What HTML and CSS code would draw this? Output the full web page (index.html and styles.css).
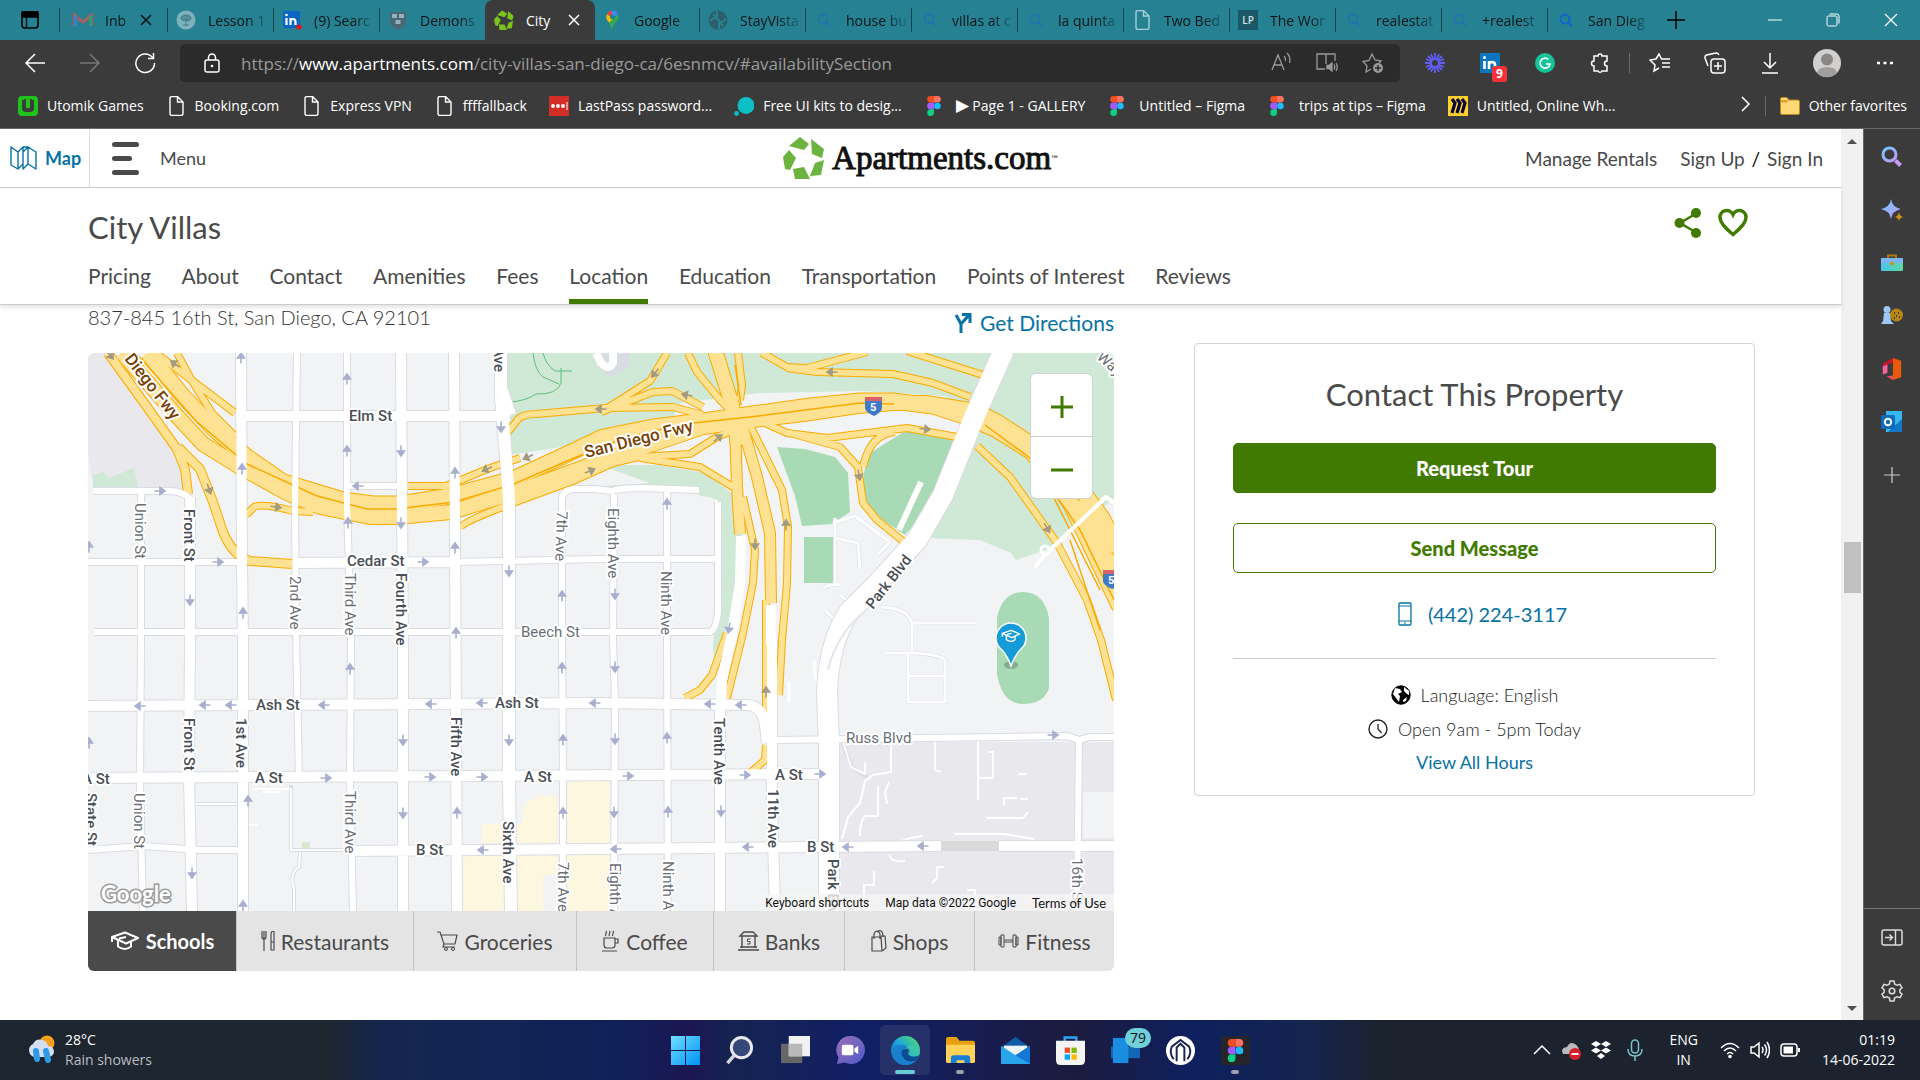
FILE: index.html
```html
<!DOCTYPE html>
<html lang="en">
<head>
<meta charset="utf-8">
<title>City Villas</title>
<link rel="stylesheet" href="styles.css">
</head>
<body>
<svg class="defs" aria-hidden="true">
  <defs>
    <linearGradient id="gEdge" x1="0" y1="1" x2="1" y2="0"><stop offset="0" stop-color="#0c59a4"/><stop offset=".5" stop-color="#1ba6dc"/><stop offset="1" stop-color="#5fe05a"/></linearGradient>
    <linearGradient id="gWin" x1="0" y1="0" x2="1" y2="1"><stop offset="0" stop-color="#6fe0ff"/><stop offset="1" stop-color="#0090f5"/></linearGradient>
    <linearGradient id="gLens" x1="0" y1="0" x2="1" y2="1"><stop offset="0" stop-color="#6fc6ff"/><stop offset="1" stop-color="#c49af5"/></linearGradient>
    <linearGradient id="gBox" x1="0" y1="0" x2="1" y2="0"><stop offset="0" stop-color="#45c4f0"/><stop offset="1" stop-color="#5fd7a0"/></linearGradient>
    <linearGradient id="gChat" x1="0" y1="0" x2="1" y2="1"><stop offset="0" stop-color="#9a6fb8"/><stop offset="1" stop-color="#5059c9"/></linearGradient>
    <path id="ar" d="M-5.500 0H1M0-3.500L5 0 0 3.500z" fill="currentColor" stroke="currentColor" stroke-width="1.600"/>
    <g id="shield"><path d="M0 3q8-3 17 0v8q0 4-8 8-9-4-9-8z" fill="#3f79c9"/><path d="M0 4V0h17v4z" fill="#d9626a"/></g>
    <g id="streets">
      <path class="s6" d="M141 493v150l-1 140 3 130M297 353l-2 150 1 130 3 147M347 353v150l4 137-1 140 3 131M563 911V780l-1-140V500q0-10 12-11h20q10 1 18 2 8-3 30-3l57 2M614 494l-1 146 2 60-1 211M667 491v149l1 271M718 502v110q-2 18-8 20H94M93 491h75q16 0 22 8M88 562h155M455 562l145-3h118M88 850l55-4 57 4h45M350 486h50M777 740l290-4 12 4 10-3h25M1079 740l-2 171"/>
      <path class="s10" d="M190 497v150l-1 130 3 134M241 353l1 210 1 80v268M401 353l2 300v258M454 353l3 558M240 416h270M295 563l165-1M88 706l175-1 340-2 144 2q15 0 18 20l2 18M88 778l742-4M352 851l589-5M999 846h115M720 700v211M772 640v160l3 111"/>
      <path class="s11" d="M501 353v45l5 60 3 42v280l2 131M510 415l-10-30"/>
      <path class="s20" d="M1004 350l-29 65-32 80-26 45-40 44-28 28q-20 30-22 80l2 51v169"/>
    </g>
    <g id="freeways">
      <path class="s16" d="M148 353l34 42 32 34 33 28 36 25 60 18 30 4h27l50-8 63-17 50-23 40-19 50-10 50-6 57-8 50-7 50-5h33l40 5 37 12 27 12 35 22 38 50 50 105"/>
      <path class="s14" d="M122 353l55 63 26 28 37 23 47 26 33 14 50 10h27l54-5 62-19 50-18 40-15 50-16 50-17 50-7 50-6 55-8 35-3h33l50 8 20 10 22 14 47 32 37 50 47 90"/>
      <path class="s8" d="M108 353l39 54 30 42 8 20 3 25M178 447l22 22 13 33 10 30q10 24 27 29l42 3"/>
      <path class="s6" d="M156 353l79 60M177 353l15 28 20 32 24 24M246 515l8-8q8-4 39 4l20 1M408 486h38l44-18 30-10M460 528q2-6 53-25l60-22 40-18 25-6 52-3 27-17 28-12M508 432l8-10q4-8 20-8l70-6 67-1 30 8M601 412l49-31 17-28M601 412l52-20 19-1 31 16M640 458l60 9 33 20M688 353l9 19 23 28 20 20M738 353l4 32-2 15M762 353l25 14 20 1 60-16M787 368l30 4 76 2 40 9 37 14M907 351l76 24M765 423l22 10 40 5 80-10 50 9M790 433l50 14 18 20 5 36 14 17 27 22M895 432q-25 2-32 35M977 446l33 31 47 66 30 57 14 40 15 60"/>
      <path class="s14" d="M715 350l17 55 6 40"/>
      <path class="s10" d="M735 425l2 62 3 47M742 425l15 52 13 56 1 70"/>
      <path class="s6" d="M750 425l32 65 6 37-1 56-5 57-3 55M743 497l12 53-2 33-10 50-16 65M727 633l-15 42-12 15-15 8M766 600v120M766 745l-1 15-15 13"/>
      <path class="s16" d="M1055 480l59 90"/><path class="s14" d="M1080 500l34 50"/>
    </g>
  </defs>
  <symbol id="doc" viewBox="0 0 20 20"><path d="M4 2.500a2 2 0 0 1 2-2h5.500l5.500 5.500v11.500a2 2 0 0 1-2 2H6a2 2 0 0 1-2-2zM11.500.5V6H17" fill="none" stroke="currentColor" stroke-width="1.400"/></symbol>
  <symbol id="mag" viewBox="0 0 20 20"><circle cx="9" cy="9" r="4.500" fill="none" stroke="currentColor" stroke-width="2"/><path d="M12.500 12.500L16 16" stroke="currentColor" stroke-width="2.200"/></symbol>
  <symbol id="figma" viewBox="0 0 14 20"><path d="M3.500 0H7v6.600H3.500a3.300 3.300 0 0 1 0-6.600z" fill="#f24e1e"/><path d="M7 0h3.500a3.300 3.300 0 0 1 0 6.600H7z" fill="#ff7262"/><path d="M3.500 6.600H7v6.700H3.500a3.300 3.300 0 0 1 0-6.700z" fill="#a259ff"/><circle cx="10.400" cy="10" r="3.300" fill="#1abcfe"/><path d="M3.500 13.300H7v3.300a3.400 3.400 0 1 1-3.500-3.300z" fill="#0acf83"/></symbol>
  <symbol id="cap" viewBox="0 0 30 20"><path d="M2 6L15 1.500 28 7 16 12.500zM8 9.500v6q7 5 13 0V10M2 6v5M9 7.500l7-1.500" fill="none" stroke="currentColor" stroke-width="2" stroke-linejoin="round"/></symbol>
</svg>

<header class="browser">
  <div class="tabstrip">
    <button class="strip-menu" aria-label="Tab actions"><svg width="20" height="20" viewBox="0 0 20 20"><rect x="2" y="2" width="16" height="16" rx="3" fill="none" stroke="#000" stroke-width="1.600"/><path d="M2 2h16v5H2zM6.500 7v11" stroke="#000" stroke-width="1.300"/></svg></button>
    <div class="tab first"><svg class="fav dim" viewBox="0 0 20 20"><path d="M1 16V5l9 7 9-7v11" fill="none" stroke="#d9534f" stroke-width="3"/><path d="M2.500 16V6" stroke="#4a7de0" stroke-width="3"/><path d="M17.500 16V6" stroke="#3aa757" stroke-width="3"/></svg><span class="tab-t">Inb</span><button class="x" aria-label="Close"><svg width="12" height="12" viewBox="0 0 12 12"><path d="M1 1l10 10M11 1L1 11" class="ln"/></svg></button></div>
    <div class="tab"><svg class="fav" viewBox="0 0 20 20"><circle cx="10" cy="10" r="9.500" fill="#7fb3bb"/><path d="M10 16V9M7 15h6M5 9q0-4 5-4t5 4q-2 3-5 1-3 2-5-1z" stroke="#3b7a84" fill="#568f98"/></svg><span class="tab-t">Lesson 1</span></div>
    <div class="tab"><svg class="fav" viewBox="0 0 20 20"><rect x="1" y="1" width="17" height="17" rx="2" fill="#0a66c2"/><path d="M4.500 8v7M8.500 15V8m0 4q0-3 2.500-3t2.500 3v3" stroke="#fff" stroke-width="2.200" fill="none"/><circle cx="4.500" cy="5" r="1.300" fill="#fff"/><circle cx="17" cy="17" r="2.600" fill="#e11"/></svg><span class="tab-t">(9) Searc</span></div>
    <div class="tab"><svg class="fav" viewBox="0 0 20 20"><path d="M2 2h16v9q-1 6-8 8.500Q3 17 2 11z" fill="#4d6672"/><path d="M4 4h5v4H4zM11 4h5v4h-5zM7.500 10h5v4h-5z" fill="#8fb5bf"/></svg><span class="tab-t">Demons</span></div>
    <div class="tab active"><svg class="fav" viewBox="782 134 44 44"><path fill="#7cc41a" d="M800 135l11 7-6 8-16-5zM813 136l12 11-3 10-11-5zM824 158l-3 16-12 1 5-13zM793 166l12 0 5 12H794zM789 147l8 9-7 13-5-1-3-13z"/></svg><span class="tab-t">City</span><button class="x" aria-label="Close"><svg width="12" height="12" viewBox="0 0 12 12"><path d="M1 1l10 10M11 1L1 11" class="ln"/></svg></button></div>
    <div class="tab maps"><svg class="fav" viewBox="0 0 20 20"><path d="M10 19.500Q9 14 5 10a6.500 6.500 0 0 1 0-6l5 3z" fill="#fbbc04"/><path d="M5 4a6.500 6.500 0 0 1 5-3.500V8z" fill="#ea4335"/><path d="M10 .5a6.500 6.500 0 0 1 6 4L9 8z" fill="#4285f4"/><path d="M16 4.500q1.500 4-2 7.500-3.500 3-4 7.500-1-4-3-7z" fill="#34a853"/><circle cx="10" cy="7" r="2.200" fill="#24808f"/></svg><span class="tab-t">Google</span></div>
    <div class="tab"><svg class="fav" viewBox="0 0 20 20"><circle cx="10" cy="10" r="9.500" fill="#2d5f6a"/><path d="M9 1v6q-4 1-7 4M11 19v-6q4-1 7-4M5 4q6 6 10 12" stroke="#268293" stroke-width="2" fill="none"/></svg><span class="tab-t">StayVista</span></div>
    <div class="tab"><svg class="fav blue"><use href="#mag"/></svg><span class="tab-t">house bu</span></div>
    <div class="tab"><svg class="fav blue"><use href="#mag"/></svg><span class="tab-t">villas at c</span></div>
    <div class="tab"><svg class="fav blue"><use href="#mag"/></svg><span class="tab-t">la quinta</span></div>
    <div class="tab"><svg class="fav pale"><use href="#doc"/></svg><span class="tab-t">Two Bed</span></div>
    <div class="tab"><span class="fav lp">LP</span><span class="tab-t">The Wor</span></div>
    <div class="tab"><svg class="fav blue"><use href="#mag"/></svg><span class="tab-t">realestat</span></div>
    <div class="tab"><svg class="fav blue"><use href="#mag"/></svg><span class="tab-t">+realest</span></div>
    <div class="tab"><svg class="fav bright"><use href="#mag"/></svg><span class="tab-t">San Dieg</span></div>
    <button class="newtab" aria-label="New tab"><svg width="18" height="18" viewBox="0 0 18 18"><path d="M9 0v18M0 9h18" stroke="#000" stroke-width="1.500"/></svg></button>
    <div class="winctl">
      <button aria-label="Minimize"><svg width="14" height="14" viewBox="0 0 14 14"><path d="M0 7h14" stroke="#fff"/></svg></button>
      <button aria-label="Restore"><svg width="14" height="14" viewBox="0 0 14 14"><path d="M1 4.500a1.500 1.500 0 0 1 1.500-1.500h7A1.500 1.500 0 0 1 11 4.500v7a1.500 1.500 0 0 1-1.500 1.500h-7A1.500 1.500 0 0 1 1 11.500zM3.500 1H11q2 0 2 2v7.500" fill="none" stroke="#fff"/></svg></button>
      <button aria-label="Close window"><svg width="14" height="14" viewBox="0 0 14 14"><path d="M1 1l12 12M13 1L1 13" stroke="#fff" stroke-width="1.200"/></svg></button>
    </div>
  </div>

  <div class="toolbar">
    <button class="tb" aria-label="Back"><svg width="22" height="22" viewBox="0 0 22 22"><path d="M21 11H2M11 2l-9 9 9 9" class="ln"/></svg></button>
    <button class="tb off" aria-label="Forward"><svg width="22" height="22" viewBox="0 0 22 22"><path d="M1 11h19M11 2l9 9-9 9" class="ln"/></svg></button>
    <button class="tb" aria-label="Reload"><svg width="22" height="22" viewBox="0 0 22 22"><path d="M18.500 5.500A9.300 9.300 0 1 0 20.500 11M19.500 1v5.500H14" class="ln"/></svg></button>
    <div class="address">
      <svg width="18" height="20" viewBox="0 0 18 20"><rect x="2" y="7" width="14" height="12" rx="2" class="ln"/><path d="M5.500 7V4.500a3.500 3.500 0 0 1 7 0V7" class="ln"/><circle cx="9" cy="13" r="1.300" fill="#fff"/></svg>
      <div class="url">https://<b>www.apartments.com</b>/city-villas-san-diego-ca/6esnmcv/#availabilitySection</div>
      <div class="addr-icons">
        <svg width="22" height="20" viewBox="0 0 22 20"><path d="M2 18L8 3l6 15M4 13h8M14 4q2 2 1.500 5M17 1q4 4 2.500 10" class="lg"/></svg>
        <svg width="22" height="20" viewBox="0 0 22 20"><path d="M9 17H1V2h9v10M10 2h9v7M11 13.500h2l3-2.500v8L13 16.500h-2z" class="lg"/><path d="M11 13.500h2l3-2.500v8l-3-2.500h-2z" fill="#9a9a9a"/><path d="M18 12.500q1.500 2.500 0 5M20 11q2.500 4 0 8" class="lg"/></svg>
        <svg width="22" height="22" viewBox="0 0 22 22"><path d="M9 17l-5 3 1-6-4-4.500 6-1L10 2l3 6 6 1-2 2" class="lg"/><circle cx="16" cy="16" r="5" fill="#9a9a9a"/><path d="M16 13v6M13 16h6" stroke="#2b2b2b" stroke-width="1.400"/></svg>
      </div>
    </div>
    <div class="exts">
      <button class="tb" aria-label="Loom"><svg width="22" height="22" viewBox="-11 -11 22 22"><path d="M0-10V10M-10 0H10M-7-7L7 7M-7 7L7-7M-4-9L4 9M4-9L-4 9M-9-4L9 4M-9 4L9-4" stroke="#625df5" stroke-width="1.800"/><circle r="3" fill="#3b3b3b"/></svg></button>
      <button class="tb" aria-label="LinkedIn"><svg width="20" height="20" viewBox="0 0 20 20"><path d="M0 0h20v20H0z" fill="#0a76bb"/><path d="M4.500 8v8M9 16V8m0 4q0-3 3-3t3 3v4" stroke="#fff" stroke-width="2.600" fill="none"/><circle cx="4.500" cy="4.500" r="1.500" fill="#fff"/></svg><span class="badge">9</span></button>
      <button class="tb" aria-label="Grammarly"><svg width="20" height="20" viewBox="0 0 20 20"><circle cx="10" cy="10" r="10" fill="#15c39a"/><path d="M13.500 6.500A5 5 0 1 0 15 11h-4" stroke="#fff" stroke-width="1.600" fill="none"/></svg></button>
      <button class="tb" aria-label="Extensions"><svg width="22" height="22" viewBox="0 0 22 22"><path d="M5 4h4a2 2 0 0 1 4 0h5v5a2.300 2.300 0 0 0 0 5v5h-5a2.200 2.200 0 0 1-4 0H5v-5a2.500 2.500 0 0 1 0-5z" class="ln"/></svg></button>
      <span class="sep"></span>
      <button class="tb" aria-label="Favorites"><svg width="22" height="22" viewBox="0 0 22 22"><path d="M10 16l-5 3 1-6-5-5 6-1 3-5 2.500 5H21M13 11h8M13 15h8" class="ln"/></svg></button>
      <button class="tb" aria-label="Collections"><svg width="22" height="22" viewBox="0 0 22 22"><rect x="7" y="7" width="14" height="14" rx="3" class="ln"/><path d="M14 10v8M10 14h8M4 14L1 6q-.5-2 1.500-3L12 1q2-.5 3 2" class="ln"/></svg></button>
      <button class="tb" aria-label="Downloads"><svg width="22" height="22" viewBox="0 0 22 22"><path d="M11 1v15M5 10l6 6 6-6M3 21h16" class="ln"/></svg></button>
      <button class="tb wide" aria-label="Profile"><svg width="30" height="30" viewBox="0 0 30 30"><circle cx="15" cy="15" r="14" fill="#d2d0ce"/><circle cx="15" cy="11.500" r="6" fill="#8a8886"/><path d="M5 25q1-6 10-6t10 6a14 14 0 0 1-20 0" fill="#a19f9d"/></svg></button>
      <button class="tb" aria-label="More"><svg width="18" height="4" viewBox="0 0 18 4"><path d="M1 2h3M7.500 2h3M14 2h3" stroke="#fff" stroke-width="2.400"/></svg></button>
    </div>
  </div>

  <nav class="bookmarks">
    <a href="#"><svg viewBox="0 0 20 20"><path d="M0 4q0-4 4-4h2v4H4v8q0 4 4 4h4q4 0 4-4V4h-2V0h2q4 0 4 4v12q0 4-4 4H4q-4 0-4-4z" fill="#1fc11b"/><path d="M6 0h8v3h-2v9H8V3H6z" fill="#1fc11b"/></svg>Utomik Games</a>
    <a href="#"><svg><use href="#doc"/></svg>Booking.com</a>
    <a href="#"><svg><use href="#doc"/></svg>Express VPN</a>
    <a href="#"><svg><use href="#doc"/></svg>ffffallback</a>
    <a href="#"><svg viewBox="0 0 20 20"><path d="M0 0h20v20H0z" fill="#d32d27"/><circle cx="4" cy="10" r="1.900" fill="#fff"/><circle cx="9" cy="10" r="1.900" fill="#fff"/><circle cx="14" cy="10" r="1.900" fill="#fff"/><path d="M18 6v8" stroke="#fff"/></svg>LastPass password...</a>
    <a href="#"><svg viewBox="0 0 20 20"><circle cx="12" cy="9.500" r="8.500" fill="#0bbfc5"/><circle cx="2.500" cy="17.500" r="2.400" fill="#0bbfc5"/></svg>Free UI kits to desig...</a>
    <a href="#" class="fg"><svg><use href="#figma"/></svg><span><span class="play">▶</span> Page 1 - GALLERY</span></a>
    <a href="#" class="fg"><svg><use href="#figma"/></svg>Untitled – Figma</a>
    <a href="#" class="fg"><svg><use href="#figma"/></svg>trips at tips – Figma</a>
    <a href="#"><svg viewBox="0 0 20 20"><path d="M0 0h20v20H0z" fill="#ffd02f"/><path d="M4 3l3 4-3 10M9 3l3 4-3 10M14 3l3 4-3 10" stroke="#050038" stroke-width="3.200" fill="none"/></svg>Untitled, Online Wh...</a>
    <div class="bm-end">
      <button class="more" aria-label="More favorites"><svg width="10" height="16" viewBox="0 0 10 16"><path d="M1 1l7 7-7 7" class="ln"/></svg></button>
      <span class="sep"></span>
      <a href="#"><svg viewBox="0 0 20 20"><path d="M.5 17V3q0-1.500 1.500-1.500h5L9 4h9q1.500 0 1.500 1.500V17q0 1.500-1.500 1.500H2Q.5 18.500.5 17z" fill="#ffd976" stroke="#b98a1c"/><path d="M.5 6.500H7L9 4H1z" fill="#d9a52a"/></svg>Other favorites</a>
    </div>
  </nav>
</header>

<div class="window">
<div class="page">
  <header class="site">
    <div class="site-l">
      <a class="maplink" href="#"><svg width="27" height="24" viewBox="0 0 27 24"><path d="M1 1v18l7 4V6zM8 6l5-5v17l-5 5M13 1l5 0v18M18 1l8 5v17l-8-5-5 5V6z" fill="none" stroke="#0672a5" stroke-width="1.400" stroke-linejoin="round"/></svg>Map</a>
      <button class="menu"><span class="burger"><i></i><i></i><i></i></span>Menu</button>
    </div>
    <a class="logo" href="#"><svg width="43" height="43" viewBox="783 135 43 43"><path fill="#6db33f" d="M800 135l9 7-5 6-15-4zM811 137l13 10-2 9-10-4zM824 158l-3 15-11 1 5-13zM793 167l11-2 6 12H795zM789 148l7 8-6 12-5-1-2-12z"/></svg><span class="logo-t">Apartments.com</span><small>™</small></a>
    <div class="site-r"><a href="#">Manage Rentals</a><span class="auth"><a href="#">Sign Up</a> <span class="slash">/</span> <a href="#">Sign In</a></span></div>
  </header>

  <section class="prop">
    <div class="prop-top">
      <h1>City Villas</h1>
      <div class="acts">
        <button aria-label="Share"><svg width="28" height="30" viewBox="0 0 28 30"><path d="M23 5L6 15l17 10" fill="none" stroke="#417a00" stroke-width="2.500"/><circle cx="22" cy="5" r="5" fill="#417a00"/><circle cx="5.500" cy="15" r="5" fill="#417a00"/><circle cx="22" cy="25" r="5" fill="#417a00"/></svg></button>
        <button aria-label="Favorite"><svg width="32" height="30" viewBox="0 0 30 30"><path d="M15 26.500Q2 16 2 9.500A6.800 6.800 0 0 1 15 6.500 6.800 6.800 0 0 1 28 9.500Q28 16 15 26.500z" fill="none" stroke="#417a00" stroke-width="3.500"/></svg></button>
      </div>
    </div>
    <nav class="sections"><a href="#">Pricing</a><a href="#">About</a><a href="#">Contact</a><a href="#">Amenities</a><a href="#">Fees</a><a href="#" class="on">Location</a><a href="#">Education</a><a href="#">Transportation</a><a href="#">Points of Interest</a><a href="#">Reviews</a></nav>
  </section>

  <main>
    <div class="left">
      <div class="addr-row"><span>837-845 16th St, San Diego, CA 92101</span><a href="#"><svg width="18" height="22" viewBox="0 0 18 22"><path d="M2 3l5 9v9M7 12l8-9M8 2.500h8V11" fill="none" stroke="#0672a5" stroke-width="3"/></svg>Get Directions</a></div>
      <div class="map">
        <svg class="map-svg" viewBox="88 353 1026 558" preserveAspectRatio="xMidYMid slice" role="img" aria-label="Map of downtown San Diego">
          <rect x="88" y="353" width="1026" height="558" fill="#f1f3f4"/>
          <path class="inst" d="M88 353h20l72 104 7 33-94-3-5-34z"/>
          <path class="park" d="M93 475l10-3 6 6 25-10 4 19H93z"/>
          <path class="park" d="M506 353h608v146l-65 50-33 11-5-7-31-13-52-2-20-6 20-30 46-90-30-16-81-5-103 2-80 10-10 20-20 14L575 445 508 455z"/>
          <path class="park" d="M575 488l90-6 35 5 3 8 20-3 5 130-13 40-2-14 8-150-20-2-10-7-90-2z"/>
          <path class="park" d="M600 465h60l45 8 40 30-10 110-17 30V500l-15-5-40-7z"/>
          <path fill="#f1f3f4" d="M765 423l95-14 83 7 14 20-42-4-50 20-60-10z"/>
          <path class="dpark" d="M777 447l28 2 30 8 13 16 2 39-18 12-30 2-7-30zM804 537h29v46h-29zM867 455l38-24 52 9-12 45-40 50-37-25-5-30z"/>
          <path class="dpark" d="M997 618q5-26 26-26t26 26v70q-5 16-26 16t-26-30z"/>
          <path class="inst" d="M833 742h281v169H833z"/><path fill="#f1f3f4" d="M1083 792h31v46h-31z"/>
          <path fill="#fef7e0" d="M567 781h43v62h-43zM525 804l12-8h21v47h-76v-19h40zM462 855h43v56h-43zM514 855h44v20h-15v36h-29zM567 855h43v56h-43z"/>
          <path fill="#d8e9cf" d="M302 842h8v6h-8z"/>

          <g class="e"><path class="s4" d="M833 523l22-7 35 26-12 12M835 518v66h5M835 538l23 5 2 26M825 588q2-4 15-3M840 595l12 10M825 610l12 12M882 607q25 1 30 16h64M912 623v30M886 653h26q33 2 33 8v41h-37v-50M908 676h37M842 742l10 25 15 10M197 804h40M291 785v65h60M300 852l-1 15q-10 6-5 22v24"/></g>
          <g class="w"><path class="s3" d="M833 523l22-7 35 26-12 12M835 518v66h5M835 538l23 5 2 26M825 588q2-4 15-3M840 595l12 10M825 610l12 12M882 607q25 1 30 16h64M912 623v30M886 653h26q33 2 33 8v41h-37v-50M908 676h37M815 660q-3 10 5 30M789 682v20"/>
          <path class="s2" d="M843 742l8 25 14 7v-12M891 742v30l-18 3-8 6-5 22-12 14-6 22M878 786v30h-12q-6 2-6 20M889 782l-4 10 2 12M935 742v28l6 2M978 742v58M978 778h15v-26h-4M1018 774h9M1004 806v-8h13M1020 799h8M986 818h37l5-6M954 834h50l30 5M890 850q3-10 33-14M889 855q3 8 16 6M874 871v14h-10v12M944 867h-7v11l-5 5M967 890h8v12M197 804h40M253 789h38v61h60M300 852l-1 15q-10 6-5 22v24M236 825h22M262 792h18"/></g>
          <path class="w s6" d="M899 530l22-48"/><path class="w s4" d="M1035 567l10-12M1050 550l56-53 8 6"/>
          <path d="M533 353q2 18 10 24l16 7M543 353q3 12 12 18h17M561 368v15q-4 12-25 11-10 7-26 8" fill="none" stroke="#5fbd7a"/>

          <use href="#streets" class="e"/>
          <path class="e s20" d="M603 345l8 20 8-5v-15" />
          <path fill="#dadada" d="M938 841h64v10h-64z"/>
          <use href="#freeways" class="fo"/>
          <use href="#freeways" class="fy"/>
          <path d="M136 353l60 68 51 43 70 32 50 13h30l57-7 60-18 60-26 50-20 60-14 66-7 110-14 34 1M985 425l45 33 50 72 34 70M735 365l6 40M1070 540l30 90M1050 490l50 100" fill="none" stroke="#f9ab00" stroke-width="1.500"/>
          <use href="#streets" class="w"/>
          <path class="w s10" d="M741 536l-1 47-8 50-10 47-1 25M771 605v40"/>
          <path class="w s8" d="M596 353l5 10q8 8 12 0v-15"/>
          <circle cx="1045" cy="550" r="4" fill="none" stroke="#fff" stroke-width="3"/><path class="w s4" d="M1050 550l56-53 8 6"/>
          <path d="M866 610q-30 25-38 60" fill="none" stroke="#e4e6ec" stroke-width="2"/>

          <g class="ba">
            <use href="#ar" transform="translate(160 491)"/><use href="#ar" transform="translate(218 562)"/><use href="#ar" transform="translate(423 562)"/><use href="#ar" transform="translate(326 778)"/><use href="#ar" transform="translate(430 777)"/><use href="#ar" transform="translate(482 777)"/><use href="#ar" transform="translate(628 776)"/><use href="#ar" transform="translate(745 775)"/><use href="#ar" transform="translate(820 774)"/><use href="#ar" transform="translate(1053 735)"/>
            <use href="#ar" transform="translate(140 706) rotate(180)"/><use href="#ar" transform="translate(205 705) rotate(180)"/><use href="#ar" transform="translate(231 705) rotate(180)"/><use href="#ar" transform="translate(324 705) rotate(180)"/><use href="#ar" transform="translate(431 704) rotate(180)"/><use href="#ar" transform="translate(482 703) rotate(180)"/><use href="#ar" transform="translate(595 703) rotate(180)"/><use href="#ar" transform="translate(710 704) rotate(180)"/><use href="#ar" transform="translate(741 705) rotate(180)"/><use href="#ar" transform="translate(358 486) rotate(180)"/><use href="#ar" transform="translate(483 850) rotate(180)"/><use href="#ar" transform="translate(616 849) rotate(180)"/><use href="#ar" transform="translate(748 847) rotate(180)"/><use href="#ar" transform="translate(848 847) rotate(180)"/><use href="#ar" transform="translate(923 846) rotate(180)"/>
            <use href="#ar" transform="translate(241 358) rotate(-90)"/><use href="#ar" transform="translate(242 469) rotate(-90)"/><use href="#ar" transform="translate(243 613) rotate(-90)"/><use href="#ar" transform="translate(347 379) rotate(-90)"/><use href="#ar" transform="translate(347 451) rotate(-90)"/><use href="#ar" transform="translate(348 523) rotate(-90)"/><use href="#ar" transform="translate(350 669) rotate(-90)"/><use href="#ar" transform="translate(455 473) rotate(-90)"/><use href="#ar" transform="translate(455 548) rotate(-90)"/><use href="#ar" transform="translate(456 633) rotate(-90)"/><use href="#ar" transform="translate(457 813) rotate(-90)"/><use href="#ar" transform="translate(562 596) rotate(-90)"/><use href="#ar" transform="translate(562 668) rotate(-90)"/><use href="#ar" transform="translate(563 740) rotate(-90)"/><use href="#ar" transform="translate(563 813) rotate(-90)"/><use href="#ar" transform="translate(667 504) rotate(-90)"/><use href="#ar" transform="translate(667 738) rotate(-90)"/><use href="#ar" transform="translate(668 812) rotate(-90)"/><use href="#ar" transform="translate(248 801) rotate(-90)"/><use href="#ar" transform="translate(243 906) rotate(-90)"/><use href="#ar" transform="translate(89 547) rotate(-90)"/><use href="#ar" transform="translate(89 743) rotate(-90)"/>
            <use href="#ar" transform="translate(190 600) rotate(90)"/><use href="#ar" transform="translate(192 873) rotate(90)"/><use href="#ar" transform="translate(401 451) rotate(90)"/><use href="#ar" transform="translate(401 523) rotate(90)"/><use href="#ar" transform="translate(403 740) rotate(90)"/><use href="#ar" transform="translate(403 813) rotate(90)"/><use href="#ar" transform="translate(501 427) rotate(90)"/><use href="#ar" transform="translate(509 571) rotate(90)"/><use href="#ar" transform="translate(509 740) rotate(90)"/><use href="#ar" transform="translate(615 594) rotate(90)"/><use href="#ar" transform="translate(615 667) rotate(90)"/><use href="#ar" transform="translate(615 739) rotate(90)"/><use href="#ar" transform="translate(614 812) rotate(90)"/><use href="#ar" transform="translate(721 811) rotate(90)"/><use href="#ar" transform="translate(729 628) rotate(100)"/>
          </g>
          <g class="ga">
            <use href="#ar" transform="translate(110 355) rotate(50)"/><use href="#ar" transform="translate(175 364) rotate(215)"/><use href="#ar" transform="translate(209 489) rotate(72)"/><use href="#ar" transform="translate(276 507) rotate(8)"/><use href="#ar" transform="translate(487 469) rotate(155)"/><use href="#ar" transform="translate(528 457) rotate(155)"/><use href="#ar" transform="translate(590 471) rotate(-22)"/><use href="#ar" transform="translate(601 409) rotate(180)"/><use href="#ar" transform="translate(655 373) rotate(130)"/><use href="#ar" transform="translate(687 395) rotate(190)"/><use href="#ar" transform="translate(718 438) rotate(-40)"/><use href="#ar" transform="translate(832 372) rotate(180)"/><use href="#ar" transform="translate(925 429) rotate(5)"/><use href="#ar" transform="translate(859 475) rotate(80)"/><use href="#ar" transform="translate(755 544) rotate(90)"/><use href="#ar" transform="translate(786 525) rotate(-90)"/><use href="#ar" transform="translate(766 692) rotate(-90)"/><use href="#ar" transform="translate(1047 528) rotate(60)"/>
          </g>

          <g class="lbl">
            <text x="349" y="421">Elm St</text><text x="347" y="566">Cedar St</text><text x="256" y="710">Ash St</text><text x="495" y="708">Ash St</text><text x="255" y="783">A St</text><text x="82" y="784">A St</text><text x="524" y="782">A St</text><text x="775" y="780">A St</text><text x="416" y="855">B St</text><text x="807" y="852">B St</text>
            <text transform="translate(184 509) rotate(90)">Front St</text><text transform="translate(396 573) rotate(90)">Fourth Ave</text><text transform="translate(184 718) rotate(90)">Front St</text><text transform="translate(236 718) rotate(90)">1st Ave</text><text transform="translate(451 717) rotate(90)">Fifth Ave</text><text transform="translate(503 821) rotate(90)">Sixth Ave</text><text transform="translate(714 718) rotate(90)">Tenth Ave</text><text transform="translate(768 789) rotate(90)">11th Ave</text><text transform="translate(828 859) rotate(90)">Park Blvd</text><text transform="translate(494 347) rotate(90)">Ave</text><text transform="translate(86 793) rotate(90)">State St</text><text transform="translate(873 610) rotate(-52)">Park Blvd</text>
          </g>
          <g class="lbl light">
            <text x="521" y="637">Beech St</text><text x="846" y="743">Russ Blvd</text>
            <text transform="translate(135 503) rotate(90)">Union St</text><text transform="translate(290 576) rotate(90)">2nd Ave</text><text transform="translate(345 573) rotate(90)">Third Ave</text><text transform="translate(557 511) rotate(92)">7th Ave</text><text transform="translate(608 508) rotate(90)">Eighth Ave</text><text transform="translate(661 571) rotate(90)">Ninth Ave</text><text transform="translate(134 793) rotate(90)">Union St</text><text transform="translate(345 791) rotate(90)">Third Ave</text><text transform="translate(558 862) rotate(90)">7th Ave</text><text transform="translate(610 863) rotate(90)">Eighth Ave</text><text transform="translate(663 861) rotate(90)">Ninth Ave</text><text transform="translate(1072 858) rotate(90)">16th St</text><text transform="translate(1096 358) rotate(42)">Way</text>
          </g>
          <g class="lbl fwy"><text transform="translate(124 359) rotate(52)">Diego Fwy</text><text transform="translate(586 458) rotate(-14)">San Diego Fwy</text></g>
          <use href="#shield" x="865" y="397"/><text x="870" y="411" class="sh">5</text>
          <use href="#shield" x="1103" y="570"/><text x="1108" y="584" class="sh">5</text>
          <ellipse cx="1011" cy="665" rx="7" ry="4" fill="#5f7f6a" opacity=".5"/>
          <path d="M1011 666q-3-9-9-16a15 15 0 1 1 18 0q-6 7-9 16z" fill="#159bd8" stroke="#fff" stroke-width="1.500"/>
          <svg x="1001" y="629" width="20" height="14" color="#fff"><use href="#cap"/></svg>
          <text x="101" y="902" class="google">Google</text>
        </svg>
        <div class="zoomctl"><button aria-label="Zoom in"><svg width="22" height="22" viewBox="0 0 22 22"><path d="M11 0v22M0 11h22" stroke="#417a00" stroke-width="3"/></svg></button><button aria-label="Zoom out"><svg width="22" height="22" viewBox="0 0 22 22"><path d="M0 11h22" stroke="#417a00" stroke-width="3"/></svg></button></div>
        <div class="credits"><button>Keyboard shortcuts</button><span>Map data ©2022 Google</span><a href="#">Terms of Use</a></div>
      </div>
      <div class="cats">
        <button class="on"><svg width="30" height="20"><use href="#cap"/></svg>Schools</button>
        <button><svg width="14" height="20" viewBox="0 0 14 20"><path d="M1 0v6q0 2 2 2t2-2V0M3 0v20M10 19V3q0-3 3-3v19zM10 11h3" fill="none" stroke="#4a4a4a" stroke-width="1.200"/></svg>Restaurants</button>
        <button><svg width="21" height="20" viewBox="0 0 21 20"><path d="M0 1h3l4 12h11l2-9H4M7 13l-1 3h12" fill="none" stroke="#4a4a4a" stroke-width="1.200"/><circle cx="9" cy="18" r="1.500" fill="none" stroke="#4a4a4a"/><circle cx="16" cy="18" r="1.500" fill="none" stroke="#4a4a4a"/></svg>Groceries</button>
        <button><svg width="18" height="22" viewBox="0 0 18 22"><path d="M2 8h11v7q0 3-3 3H5q-3 0-3-3zM13 9h3v4h-3M0 21h15M4 6q-1-1 0-2.500T4 1M7.500 6q-1-1 0-2.500T7.500 1M11 6q-1-1 0-2.500T11 1" fill="none" stroke="#4a4a4a" stroke-width="1.200"/></svg>Coffee</button>
        <button><svg width="21" height="20" viewBox="0 0 21 20"><path d="M2 5l4-4h9l4 4zM4 5v12M17 5v12M2 16h17M0 19h21" fill="none" stroke="#4a4a4a" stroke-width="1.400"/><path d="M12.500 8h-3v2.500h2.500V13H9" fill="none" stroke="#4a4a4a"/></svg>Banks</button>
        <button><svg width="16" height="22" viewBox="0 0 16 22"><path d="M1 7h9l1 14H1zM10 6h4l1 12-4 3M3 9V4q1-3 3-3t3 3v5M6 2q2-2 4-1 2 1 2 6" fill="none" stroke="#4a4a4a" stroke-width="1.200"/></svg>Shops</button>
        <button><svg width="21" height="14" viewBox="0 0 21 14"><path d="M1 3h2v8H1zM3 1h3v12H3zM15 1h3v12h-3zM18 3h2v8h-2zM6 6h9M6 8h9" fill="none" stroke="#4a4a4a" stroke-width="1"/></svg>Fitness</button>
      </div>
    </div>
    <aside class="card">
      <h2>Contact This Property</h2>
      <button class="btn solid">Request Tour</button>
      <button class="btn">Send Message</button>
      <a class="phone" href="#"><svg width="14" height="24" viewBox="0 0 14 24"><rect x="1" y="1" width="12" height="22" rx="1" fill="none" stroke="#0672a5" stroke-width="1.300"/><path d="M1 4h12M1 19h12M6 21h2" stroke="#0672a5"/></svg>(442) 224-3117</a>
      <hr>
      <p><svg width="20" height="20" viewBox="0 0 20 20"><circle cx="10" cy="10" r="9.200" fill="#000" stroke="#000"/><path d="M4 3l5 1 2 3-4 2 2 2-1 6-3-4-3-4zM13 2l5 4v4l-2-1-3-3zM12 15l4-3-1 4-3 1z" fill="#fff"/></svg>Language: English</p>
      <p><svg width="20" height="20" viewBox="0 0 20 20"><circle cx="10" cy="10" r="9" fill="none" stroke="#222" stroke-width="1.400"/><path d="M10 5v5l3.500 4" fill="none" stroke="#222" stroke-width="1.300"/></svg>Open 9am - 5pm Today</p>
      <a class="hours" href="#">View All Hours</a>
    </aside>
  </main>
</div>
<div class="scroll"><i class="up"></i><i class="thumb"></i><i class="down"></i></div>
<aside class="side">
  <button aria-label="Search"><svg viewBox="0 0 22 22"><circle cx="8.500" cy="8.500" r="6.500" fill="none" stroke="url(#gLens)" stroke-width="3"/><path d="M14.500 14.500l5 5" stroke="#c79bf2" stroke-width="4"/></svg></button>
  <button aria-label="Discover"><svg viewBox="0 0 22 22"><path d="M10 0q1 8 10 10-9 2-10 10Q9 12 0 10 9 8 10 0z" fill="url(#gLens)"/><path d="M18 13q.5 4 4 5-3.500 1-4 4-.5-3-4-4 3.500-1 4-5z" fill="#c8930f"/></svg></button>
  <button aria-label="Tools"><svg viewBox="0 0 22 22"><path d="M7 6V3.500h8V6" fill="none" stroke="#b07a12" stroke-width="1.800"/><rect x="0" y="6" width="22" height="13" rx="1" fill="url(#gBox)"/><path d="M0 6h22v5H0z" fill="#7db4f5"/><circle cx="11" cy="11.500" r="2" fill="#c8930f"/></svg></button>
  <button aria-label="Games"><svg viewBox="0 0 22 22"><circle cx="15.500" cy="10" r="6.500" fill="#b8860b"/><path d="M13 8h1M17 8h1M15 11h1M13 13h1M18 12h1" stroke="#3b3b3b" stroke-width="2"/><circle cx="6" cy="4.500" r="3.500" fill="#9cc8f5"/><path d="M3 8h6l1 8 3 3H0l2-3z" fill="#9cc8f5"/></svg></button>
  <button aria-label="Office"><svg viewBox="0 0 22 24"><path d="M12 0l9 3v18l-9 3z" fill="#e8590c"/><path d="M12 0v5L6 7v9l-5 2V6z" fill="#c4162a"/><path d="M5 20l7-1v5z" fill="#ef4a5a"/><path d="M1 9l5-2v9l-5 2z" fill="#e66ba0"/></svg></button>
  <button aria-label="Outlook"><svg viewBox="0 0 22 22"><path d="M5 0h16v21H5z" fill="#35b8f1"/><path d="M21 8v13H7z" fill="#1277c9"/><rect y="4" width="14" height="14" rx="1.500" fill="#0f6cbd"/><circle cx="7" cy="11" r="3.200" fill="none" stroke="#fff" stroke-width="2"/></svg></button>
  <button aria-label="Add"><svg viewBox="0 0 22 22"><path d="M11 3v16M3 11h16" stroke="#ccc" stroke-width="1.200"/></svg></button>
  <div class="side-end">
    <button aria-label="Hide sidebar"><svg viewBox="0 0 22 22"><rect x="1" y="3" width="20" height="15" rx="2" fill="none" stroke="#ddd" stroke-width="1.500"/><path d="M14.500 3v15M4 10.500h7M8.500 7.500l3 3-3 3" fill="none" stroke="#ddd" stroke-width="1.400"/></svg></button>
    <button aria-label="Settings"><svg viewBox="0 0 22 22"><path d="M9 1h4l.6 3 2.400 1.300 3-1 2 3.500-2.200 2v2.400l2.200 2-2 3.500-3-1L13.600 18 13 21H9l-.6-3L6 16.700l-3 1-2-3.500 2.200-2V9.800L1 7.800l2-3.500 3 1L8.400 4z" fill="none" stroke="#ddd" stroke-width="1.500"/><circle cx="11" cy="11" r="2.800" fill="none" stroke="#ddd" stroke-width="1.500"/></svg></button>
  </div>
</aside>
</div>

<footer class="taskbar">
  <div class="weather"><svg width="30" height="30" viewBox="0 0 30 30"><circle cx="21" cy="8" r="7.500" fill="#f9a11b"/><path d="M8 22a7 7 0 0 1-1-13 8 8 0 0 1 15 2 5.500 5.500 0 0 1 1 11z" fill="#d5def0"/><path d="M10 16l1 8M20 16l2 9" stroke="#2c9be8" stroke-width="6" stroke-linecap="round"/></svg><div>28°C<br><span>Rain showers</span></div></div>
  <div class="apps">
    <button aria-label="Start"><svg viewBox="0 0 30 30"><path d="M0 0h14.500v14.500H0zM15.500 0H30v14.500H15.500zM0 15.500h14.500V30H0zM15.500 15.500H30V30H15.500z" fill="url(#gWin)"/></svg></button>
    <button aria-label="Search"><svg viewBox="0 0 30 30"><circle cx="16" cy="12" r="10.500" fill="#36487a" stroke="#e8e8ee" stroke-width="3"/><path d="M8.500 20L1.500 28" stroke="#d5d5dd" stroke-width="3.500"/></svg></button>
    <button aria-label="Task view"><svg viewBox="0 0 30 30"><path d="M0 8h22v20H0z" fill="#666"/><path d="M8 0h22v21H8z" fill="#f2f2f2"/><path d="M8 8h14v13H8z" fill="#b9b9b9"/></svg></button>
    <button aria-label="Chat"><svg viewBox="0 0 30 30"><path d="M15 0a14.500 14.500 0 1 1-6 27.500L1 29l1.500-7A14.500 14.500 0 0 1 15 0z" fill="url(#gChat)"/><rect x="6" y="9" width="12" height="11" rx="2" fill="#fff"/><path d="M19 13l4-3v9l-4-3z" fill="#fff"/></svg></button>
    <button class="cur" aria-label="Edge"><svg viewBox="0 0 30 30"><circle cx="15" cy="15" r="15" fill="url(#gEdge)"/><path d="M.5 17Q2 9 10 9q6 0 8 4-5-1-7 3-2 5 3 9 6 4 13-1-6 7-14 6Q2 28 .5 17z" fill="#1b7fd0"/><path d="M11 16q2-4 7-3 3 3 0 6 4 4 11 1-1 3-3 5-8 3-12-1-4-4-3-8z" fill="#0c4a94"/><path d="M13 15q3-3 5-1 1 2-1 4 2 4 9 3 3-1 4-3-1-4-4-7-9-3-13 4z" fill="#45d0a8" opacity=".5"/></svg></button>
    <button class="run" aria-label="Explorer"><svg viewBox="0 0 30 30"><path d="M0 3q0-2 2-2h9l3 4h14q2 0 2 2v19H0z" fill="#e8a010"/><path d="M0 9h30v17q0 2-2 2H2q-2 0-2-2z" fill="#ffd35a"/><path d="M5 28v-5q0-3 3-3h14q3 0 3 3v5h-6v-3h-8v3z" fill="#1a7fd4"/></svg></button>
    <button aria-label="Mail"><svg viewBox="0 0 30 30"><path d="M0 12L15 1l15 11v4H0z" fill="#0f5ba5"/><path d="M3 10h24v10H3z" fill="#eef3f8"/><path d="M0 10l15 10 15-10v19H0z" fill="#2aa5ec"/><path d="M15 20l15-10v19z" fill="#1479d6"/></svg></button>
    <button aria-label="Store"><svg viewBox="0 0 30 30"><path d="M9 7V1.500h12V7" fill="none" stroke="#2ba6f0" stroke-width="2.500"/><path d="M0 5h30v20q0 5-5 5H5q-5 0-5-5z" fill="#f5f5f5"/><path d="M9 12h5.500v5.500H9z" fill="#f25022"/><path d="M16 12h5.500v5.500H16z" fill="#7fba00"/><path d="M9 19h5.500v5.500H9z" fill="#00a4ef"/><path d="M16 19h5.500v5.500H16z" fill="#ffb900"/></svg></button>
    <button class="count" aria-label="Phone Link"><svg viewBox="0 0 30 30"><path d="M0 11h30v12H0z" fill="#1266b5"/><path d="M2 2h16v26H2z" fill="#1b8de0"/></svg><span>79</span></button>
    <button aria-label="Nord"><svg viewBox="0 0 30 30"><circle cx="15" cy="15" r="15" fill="#fff"/><path d="M8 24q-5-6-2-13l9-7 9 7q3 7-2 13" fill="none" stroke="#1a2150" stroke-width="2"/><path d="M11 26V12l4-4 4 4v14" fill="none" stroke="#1a2150" stroke-width="2"/></svg></button>
    <button class="run" aria-label="Figma"><svg viewBox="0 0 30 30"><rect width="30" height="30" rx="3" fill="#26262a"/><path d="M11 3h4v8h-4a4 4 0 0 1 0-8z" fill="#f24e1e"/><path d="M15 3h4a4 4 0 0 1 0 8h-4z" fill="#ff7262"/><path d="M11 11h4v8h-4a4 4 0 0 1 0-8z" fill="#a259ff"/><circle cx="19" cy="15" r="4" fill="#1abcfe"/><path d="M11 19h4v4a4 4 0 1 1-4-4z" fill="#0acf83"/></svg></button>
  </div>
  <div class="tray">
    <svg width="18" height="10" viewBox="0 0 18 10"><path d="M1 9l8-8 8 8" class="ln"/></svg>
    <svg width="20" height="20" viewBox="0 0 20 20"><path d="M2 14Q-1 8 6 7q3-6 8-3 5 3 4 10z" fill="#b9b9be"/><circle cx="14" cy="14" r="6" fill="#d9202a"/><path d="M10.500 14h7" stroke="#fff" stroke-width="2"/></svg>
    <svg width="20" height="18" viewBox="0 0 20 18"><path d="M5 0l5 3-5 3-5-3zM15 0l5 3-5 3-5-3zM5 6.500l5 3-5 3-5-3zM15 6.500l5 3-5 3-5-3zM10 12l4 3-4 3-4-3z" fill="#fff"/></svg>
    <svg class="mic" width="16" height="22" viewBox="0 0 16 22"><rect x="4.500" y="1" width="7" height="13" rx="3.500" fill="none" stroke="#79c4cc" stroke-width="1.500"/><path d="M1 10q0 7 7 7t7-7M8 17v5" fill="none" stroke="#79c4cc" stroke-width="1.500"/></svg>
    <div class="lang">ENG<br>IN</div>
    <svg width="20" height="18" viewBox="0 0 20 18"><path d="M1 7q9-9 18 0M4 10q6-6 12 0M7 13q3-3 6 0" class="ln"/><circle cx="10" cy="15.500" r="1.800" fill="#fff"/></svg>
    <svg width="20" height="18" viewBox="0 0 20 18"><path d="M1 6h3l5-4v14l-5-4H1zM12 6q2 3 0 6M14.500 3.500q4 5.500 0 11M17 1q5 8 0 16" class="ln"/></svg>
    <svg width="20" height="14" viewBox="0 0 20 14"><rect x="1" y="1" width="16" height="12" rx="3" class="ln"/><path d="M3.500 3.500H13v7H3.500z" fill="#fff"/><path d="M19 5v4" stroke="#fff" stroke-width="2"/></svg>
    <div class="clock">01:19<br>14-06-2022</div>
  </div>
</footer>
</body>
</html>
```
FILE: styles.css
```css
* { box-sizing: border-box; }
body { margin: 0; min-height: 100vh; display: flex; flex-direction: column; font-family: Lato, sans-serif; color: #4a4a4a; background: #fff; }
button { border: 0; background: none; padding: 0; font: inherit; color: inherit; }
a { color: inherit; text-decoration: none; }
h1, h2, p { margin: 0; font-weight: 400; }
.defs { position: absolute; width: 0; height: 0; }
.ln { fill: none; stroke: currentColor; stroke-width: 1.5; }
.lg { fill: none; stroke: #9a9a9a; stroke-width: 1.3; }

/* browser frame */
.browser { font-family: "Open Sans", sans-serif; font-size: 14px; color: #fff; background: #3b3b3b; border-bottom: 1px solid #6a6a6a; }
.tabstrip { display: flex; height: 40px; background: #268293; color: #0a1416; }
.strip-menu { width: 59px; display: grid; place-items: center; }
.tab { width: 106px; display: flex; align-items: center; gap: 12px; padding-left: 9px; position: relative; white-space: nowrap; }
.tab::before { content: ""; position: absolute; left: 0; top: 8px; height: 24px; width: 1px; background: #0d4551; }
.tab.first { width: 108px; padding-left: 14px; }
.tab.active::before, .tab.maps::before { display: none; }
.tab.active { width: 110px; background: #3b3b3b; color: #fff; border-radius: 8px 8px 0 0; }
.tab.maps { width: 104px; padding-left: 7px; }
.fav { width: 20px; height: 20px; flex: none; }
.fav.dim { opacity: .7; }
.fav.blue { color: #1f76ab; }
.fav.bright { color: #0f66cf; }
.fav.pale { color: #a5d0d6; }
.fav.lp { background: #1a5865; color: #d5e4e6; font-size: 10px; font-weight: 600; line-height: 20px; text-align: center; }
.tab-t { flex: 1; -webkit-mask-image: linear-gradient(90deg, #000 60%, #0003 92%); mask-image: linear-gradient(90deg, #000 60%, #0003 92%); }
.active .tab-t { -webkit-mask-image: none; mask-image: none; }
.tab .x { width: 12px; margin: 0 15px 0 -6px; }
.newtab { width: 46px; display: grid; place-items: center; }
.winctl { margin-left: auto; display: flex; }
.winctl button { width: 58px; display: grid; place-items: center; }
.toolbar { display: flex; align-items: center; height: 46px; padding: 0 8px 0 7px; }
.tb { width: 55px; height: 40px; display: grid; place-items: center; position: relative; }
.tb.off { color: #777; }
.tb.wide { width: 60px; }
.address { flex: 1; display: flex; align-items: center; height: 38px; margin: 0 7px 0 8px; padding: 0 16px 0 23px; background: #2b2b2b; border-radius: 5px; }
.url { flex: 1; margin-left: 20px; font-size: 17px; color: #9a9a9a; }
.url b { color: #fff; font-weight: 400; }
.addr-icons { display: flex; gap: 24px; }
.exts { display: flex; align-items: center; }
.sep { width: 1px; height: 20px; margin: 0 2px; background: #6a6a6a; }
.badge { position: absolute; right: 10px; bottom: 1px; width: 15px; height: 16px; border-radius: 3px; background: #f7313a; font-size: 12px; font-weight: 700; line-height: 16px; }
.bookmarks { display: flex; align-items: center; height: 42px; padding: 0 13px 3px 18px; }
.bookmarks a { display: flex; align-items: center; gap: 9px; margin-right: 22px; white-space: nowrap; }
.bookmarks a svg { width: 20px; height: 20px; }
.bookmarks .fg { gap: 12px; }
.play { font-size: 17px; line-height: 14px; }
.bm-end { margin-left: auto; display: flex; align-items: center; }
.bookmarks .bm-end a { margin: 0 0 0 12px; }
.more { margin-right: 12px; }

/* page */
.window { flex: 1; display: flex; }
.page { flex: 1; min-width: 0; }
.site { display: grid; grid-template-columns: 1fr auto 1fr; align-items: center; height: 59px; border-bottom: 1px solid #ccc; font-size: 18px; }
.site-l { display: flex; align-self: stretch; }
.maplink { display: flex; align-items: center; gap: 8px; width: 90px; padding-left: 10px; border-right: 1px solid #ddd; color: #0672a5; font-weight: 700; }
.menu { display: flex; align-items: center; gap: 21px; padding-left: 22px; }
.burger { display: grid; gap: 9px; width: 27px; }
.burger i { height: 5px; border-radius: 3px; background: #4a4a4a; }
.burger i:nth-child(2) { width: 20px; }
.logo { display: flex; align-items: center; color: #111; }
.logo-t { margin-left: 6px; font: 33px "Liberation Serif", serif; -webkit-text-stroke: 1px #111; }
.logo small { align-self: center; font-size: 9px; }
.site-r { justify-self: end; display: flex; gap: 23px; padding-right: 18px; font-size: 19px; }
.slash { margin: 0 2px; color: #000; }
.prop { padding: 20px 88px 0; height: 117px; border-bottom: 1px solid #ccc; box-shadow: 0 2px 5px #0002; position: relative; display: flex; flex-direction: column; }
.prop-top { display: flex; justify-content: space-between; align-items: flex-start; }
h1 { font-size: 31px; line-height: 38px; }
.acts { display: flex; gap: 15px; padding-right: 4px; }
.sections { display: flex; justify-content: space-between; max-width: 1143px; font-size: 21px; margin-top: auto; }
.sections a { padding: 0 0 11px; line-height: 24px; border-bottom: 5px solid transparent; }
.sections .on { border-color: #417a00; }
main { display: grid; grid-template-columns: minmax(0, 1fr) 561px; gap: 80px; padding: 0 86px 0 88px; align-items: start; }
.addr-row { display: flex; justify-content: space-between; height: 48px; font-size: 20px; font-weight: 300; line-height: 24px; color: #333; }
.addr-row a { display: flex; align-items: center; gap: 8px; height: 36px; color: #0672a5; font-size: 21px; font-weight: 400; }
.map { position: relative; aspect-ratio: 1026 / 558; overflow: hidden; border-radius: 6px 6px 0 0; }
.map-svg { display: block; width: 100%; height: 100%; }
.inst { fill: #e8e8ed; }
.park { fill: #cfe9d6; }
.dpark { fill: #a8dab5; }
.e, .w, .fo, .fy { --edge: 0px; fill: none; stroke-linejoin: round; }
.e { --edge: 2px; stroke: #dadce3; }
.w { stroke: #fff; }
.fo { --edge: 2px; stroke: #f9ab00; }
.fy { stroke: #fde293; }
.s2 { stroke-width: 2px; }
.s3 { stroke-width: 3px; }
.s4 { stroke-width: 4px; }
.s6 { stroke-width: calc(6px + var(--edge)); }
.s8 { stroke-width: calc(8px + var(--edge)); }
.s10 { stroke-width: calc(10px + var(--edge)); }
.s11 { stroke-width: calc(12px + var(--edge)); }
.s14 { stroke-width: calc(14px + var(--edge)); }
.s16 { stroke-width: calc(15px + var(--edge)); }
.s20 { stroke-width: calc(20px + var(--edge)); }
.ba { color: #a9afcf; }
.ga { color: #a39a80; }
.lbl { font: 500 15px Roboto, sans-serif; fill: #4a4f57; stroke: #fff; stroke-width: 4px; stroke-linejoin: round; paint-order: stroke; }
.lbl.light { font-weight: 400; fill: #6b7076; }
.lbl.fwy { font-size: 17px; fill: #783f04; }
.sh { font: 700 11px Roboto, sans-serif; fill: #fff; }
.google { font: 700 22px Lato, sans-serif; fill: #fff; stroke: #9a9a9a; stroke-width: 3px; paint-order: stroke; }
.zoomctl { position: absolute; top: 21px; right: 22px; width: 61px; border-radius: 5px; background: #fff; box-shadow: 0 0 0 1px #d0d4d8; }
.zoomctl button { display: grid; place-items: center; width: 100%; height: 62px; padding-top: 4px; }
.zoomctl button + button { border-top: 1px solid #ccc; }
.credits { position: absolute; right: 0; bottom: 0; display: flex; align-items: center; gap: 16px; height: 17px; padding: 0 8px 0 6px; background: #f5f5f5cc; font: 12px Roboto, sans-serif; color: #111; }
.credits a { font-family: Lato, sans-serif; font-size: 13px; }
.cats { display: grid; grid-template-columns: 148fr 177fr 163fr 137fr 131fr 130fr 140fr; height: 60px; border-radius: 0 0 6px 6px; overflow: hidden; background: #e4e4e4; font-size: 21px; }
.cats button { display: flex; align-items: center; justify-content: center; gap: 6px; border-left: 1px solid #c4c4c4; }
.cats .on { background: #4a4a4a; color: #fff; font-size: 20px; font-weight: 700; border: 0; }
.card { margin-top: 38px; padding: 32px 38px 17px; border: 1px solid #d4d4d4; border-radius: 4px; text-align: center; display: flex; flex-direction: column; align-items: center; font-size: 18px; font-weight: 300; color: #222; }
h2 { font-size: 31px; line-height: 36px; color: #4a4a4a; margin-bottom: 31px; }
.btn { width: 100%; height: 50px; border: 1px solid #417a00; border-radius: 5px; color: #417a00; font-size: 20px; font-weight: 900; margin-bottom: 30px; }
.solid { background: #417a00; color: #fff; }
.phone { display: flex; align-items: center; gap: 16px; height: 22px; padding-left: 16px; font-size: 20px; font-weight: 400; color: #0672a5; }
hr { width: 100%; margin: 33px 0 19px; border: 0; border-top: 1px solid #ccc; }
.card p { display: flex; align-items: center; gap: 10px; height: 34px; font-weight: 300; }
.hours { line-height: 32px; color: #0672a5; font-weight: 400; }
.scroll { width: 22px; display: flex; flex-direction: column; align-items: center; padding: 10px 0 9px; background: #f1f1f1; }
.scroll i { width: 0; border: 5px solid transparent; }
.scroll .up { border-top: 0; border-bottom-color: #505050; }
.scroll .thumb { width: 17px; height: 51px; border: 0; background: #c1c1c1; margin-top: 398px; }
.scroll .down { border-bottom: 0; border-top-color: #505050; margin-top: auto; }
.side { width: 57px; display: flex; flex-direction: column; align-items: center; padding-top: 17px; background: #3b3b3b; border-left: 1px solid #666; gap: 31px; }
.side svg { width: 22px; height: 22px; display: block; }
.side-end { margin-top: auto; align-self: stretch; display: grid; justify-items: center; gap: 31px; padding: 18px 0; border-top: 1px solid #777; }

/* taskbar */
.taskbar { display: grid; grid-template-columns: 1fr auto 1fr; align-items: center; height: 60px; color: #fff; font: 14px/20px "Open Sans", sans-serif; background: linear-gradient(90deg, #1d252e 0, #1d252e 17%, #14264f 20%, #102159 32%, #1b1652 36%, #152350 38%, #111f66 45%, #1c1b3e 56%, #0e205e 62%, #14244f 68%, #1c222e 72%); }
.weather { display: flex; gap: 9px; align-items: center; padding-left: 26px; }
.weather span { color: #b9bdc4; }
.apps { display: flex; gap: 5px; }
.apps button { width: 50px; height: 50px; display: grid; place-items: center; position: relative; border-radius: 5px; }
.apps svg { width: 29px; height: 29px; }
.apps .cur { background: #263069; }
.cur::after, .run::after { content: ""; position: absolute; bottom: 1px; width: 8px; height: 4px; border-radius: 2px; background: #9a9fb0; }
.cur::after { width: 20px; background: #66ccd6; }
.count span { position: absolute; right: -1px; top: 3px; width: 26px; height: 20px; border-radius: 10px; background: #6ed0d8; color: #111; }
.tray { justify-self: end; display: flex; align-items: center; gap: 10px; padding-right: 25px; text-align: right; }
.tray .mic { margin: 0 0 0 6px; }
.lang { text-align: center; margin: 0 12px 0 16px; }
.clock { margin-left: 12px; }
```
